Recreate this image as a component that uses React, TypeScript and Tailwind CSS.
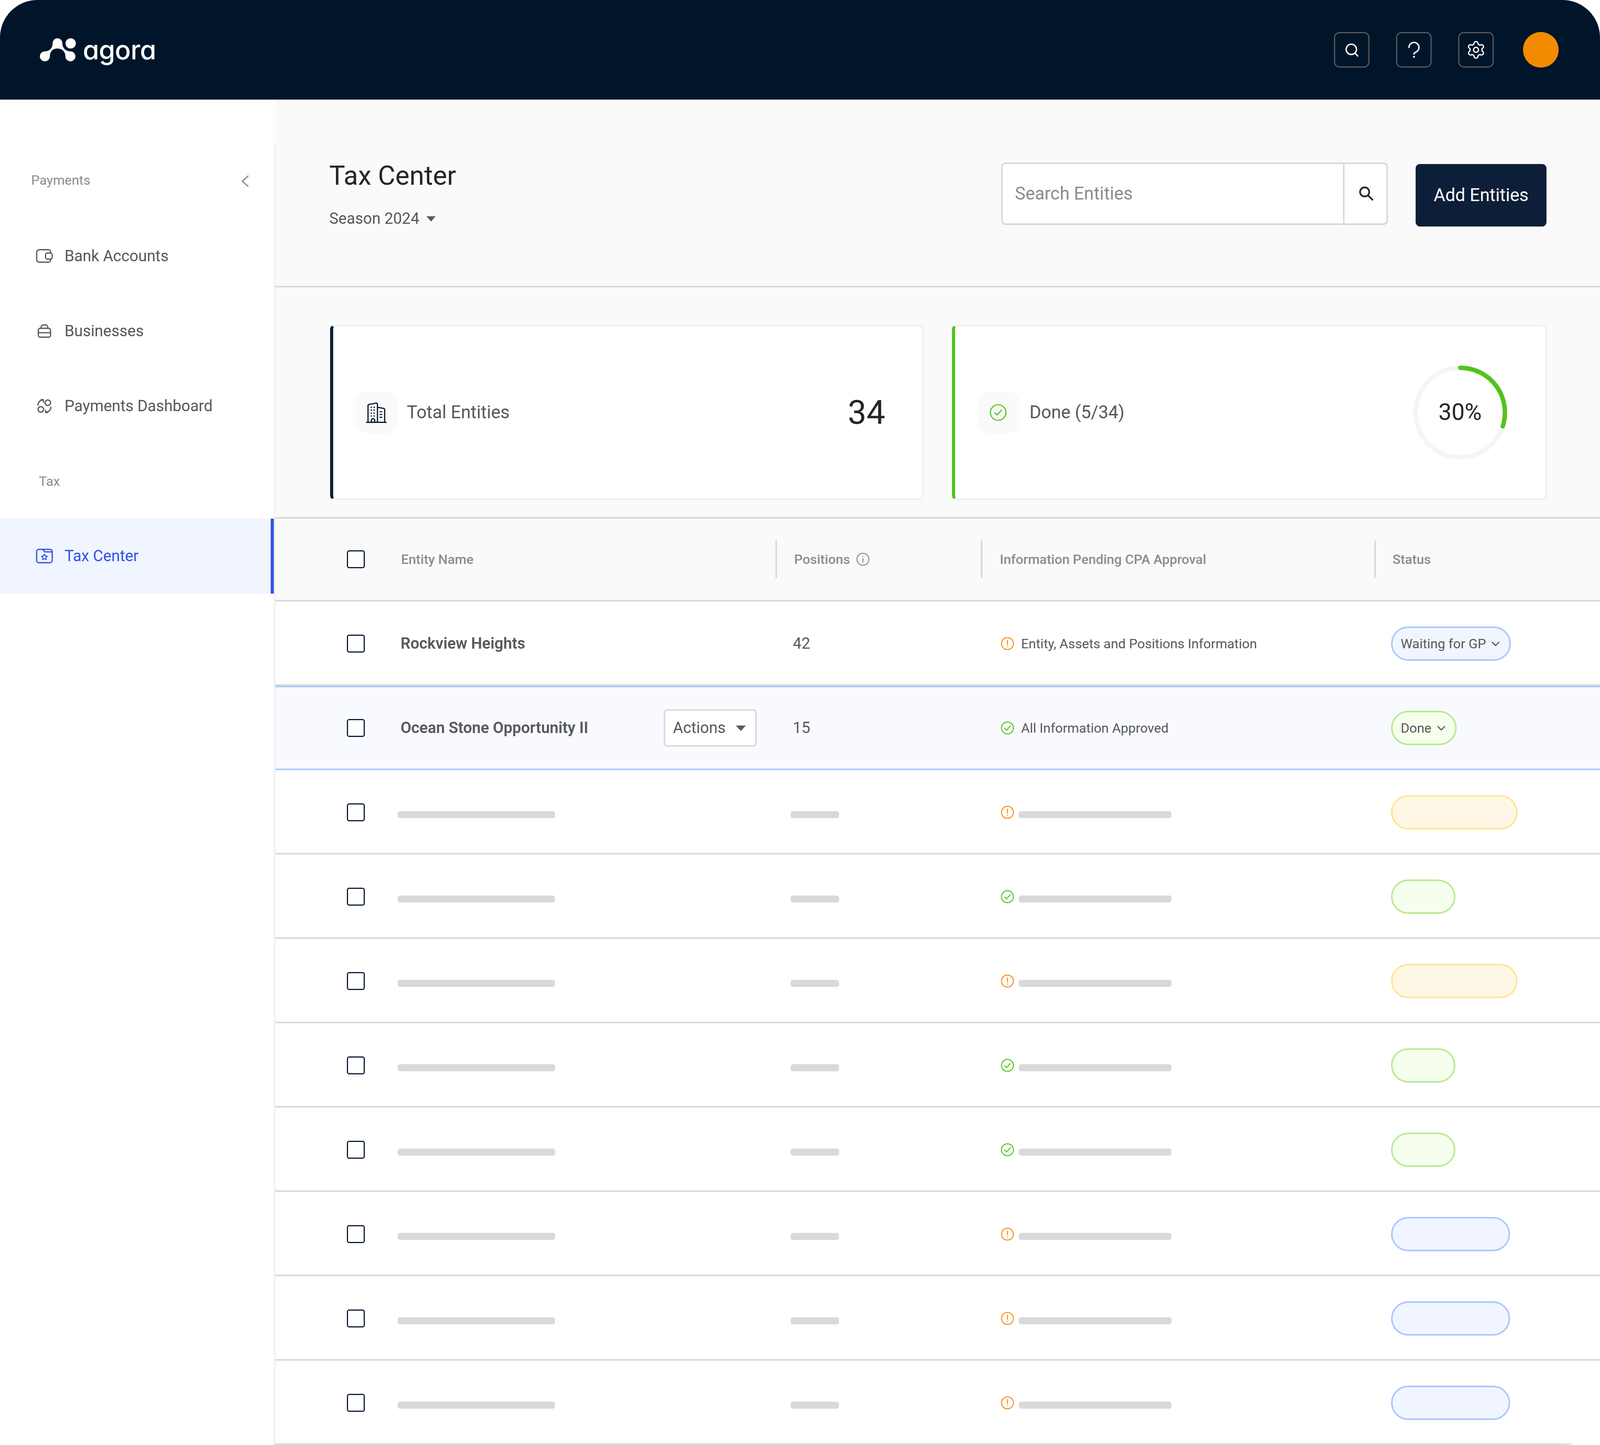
import type { ReactNode } from "react";
import { Settings } from "lucide-react";

type Tone = "warn" | "ok";
type Pill = "yellow" | "green" | "blue";

const skeletonRows: { tone: Tone; pill: Pill }[] = [
  { tone: "warn", pill: "yellow" },
  { tone: "ok", pill: "green" },
  { tone: "warn", pill: "yellow" },
  { tone: "ok", pill: "green" },
  { tone: "ok", pill: "green" },
  { tone: "warn", pill: "blue" },
  { tone: "warn", pill: "blue" },
  { tone: "warn", pill: "blue" },
];

function Logo() {
  return (
    <div className="flex items-center gap-[0.417vw]">
      <svg className="w-[2.257vw] h-[1.458vw]" viewBox="0 0 130 84" fill="#fff">
        <path d="M46 18 A17.5 18 0 0 1 81 18 C81 34 92 47 110 47 A18 18 0 1 1 92 65 C92 48 80 37 63 37 C46 37 36 48 36 65 A18 18 0 1 1 18 47 C36 47 46 34 46 18 Z" />
        <circle cx="111" cy="18.5" r="18.5" />
      </svg>
      <span className="text-[1.649vw] leading-[1.458vw] font-medium text-white font-['Inter',sans-serif] [font-feature-settings:'cv11'] tracking-[-0.017vw]">
        agora
      </span>
    </div>
  );
}

function HeaderButton({ children }: { children: ReactNode }) {
  return (
    <div className="w-[2.222vw] h-[2.222vw] rounded-[0.347vw] border-[3px] border-[#595959] flex items-center justify-center">
      {children}
    </div>
  );
}

function Header() {
  return (
    <header className="h-[255px] shrink-0 bg-[#001529] flex items-center justify-between pl-[2.5vw] pr-[2.587vw]">
      <Logo />
      <div className="flex items-center">
        <div className="flex items-center gap-[1.667vw] mr-[1.823vw]">
          <HeaderButton>
            <svg className="w-[1.111vw] h-[1.111vw]" viewBox="0 0 64 64" fill="none" stroke="#fff" strokeWidth="5" strokeLinecap="round">
              <circle cx="30" cy="30" r="18.5" />
              <path d="M43 43 L53 54" />
            </svg>
          </HeaderButton>
          <HeaderButton>
            <svg className="w-[1.111vw] h-[1.111vw]" viewBox="0 0 64 64" fill="none" stroke="#fff" strokeWidth="5" strokeLinecap="round">
              <path d="M14 23 A18 18 0 1 1 41.5 38.5 C35 42 32 43 32 47" />
              <circle cx="32" cy="57" r="2.5" fill="#fff" stroke="#fff" strokeWidth="2" />
            </svg>
          </HeaderButton>
          <HeaderButton>
            <Settings className="w-[1.25vw] h-[1.25vw]" color="#fff" strokeWidth={1.5} />
          </HeaderButton>
        </div>
        <div className="w-[2.222vw] h-[2.222vw] rounded-full bg-[#F38B00]" />
      </div>
    </header>
  );
}

function SideItem({ label, active, children }: { label: string; active?: boolean; children: ReactNode }) {
  return (
    <div
      className={
        active
          ? "h-[192px] flex items-center pl-[2.222vw] bg-[#F0F5FF] border-r-[0.208vw] border-[#2F54EB]"
          : "h-[192px] flex items-center pl-[2.222vw]"
      }
    >
      {children}
      <span
        className={
          active
            ? "ml-[0.7vw] text-[0.972vw] leading-[1.2] text-[#2F54EB]"
            : "ml-[0.7vw] text-[0.972vw] leading-[1.2] text-[#595959]"
        }
      >
        {label}
      </span>
    </div>
  );
}

function Sidebar() {
  const s = { fill: "none", stroke: "#595959", strokeWidth: 4.5, strokeLinecap: "round" as const, strokeLinejoin: "round" as const };
  const icon = "w-[1.111vw] h-[1.111vw] shrink-0";
  return (
    <aside className="w-[17.222vw] shrink-0 flex flex-col bg-white">
      <div className="h-[112px] shrink-0" />
      <div className="flex-1 border-r-4 border-[#F0F0F0] flex flex-col">
        <div className="h-[193px] flex items-center justify-between pl-[1.95vw] pr-[1.597vw]">
          <span className="text-[0.833vw] leading-[1.2] text-[#8C8C8C] mt-[-4px]">Payments</span>
          <svg className="w-[0.451vw] h-[0.729vw]" viewBox="0 0 26 42" fill="none" stroke="#8C8C8C" strokeWidth="4.5">
            <path d="M26 1 L3 21 L26 41" strokeLinejoin="round" />
          </svg>
        </div>
        <SideItem label="Bank Accounts">
          <svg className={icon} viewBox="0 0 64 64" {...s}>
            <path d="M54 21 V17 A8 8 0 0 0 46 9 H14 A10 10 0 0 0 4 19 V44 A10 10 0 0 0 14 54 H46 A8 8 0 0 0 54 46 V43" />
            <rect x="36" y="21" width="24" height="22" rx="7" />
          </svg>
        </SideItem>
        <SideItem label="Businesses">
          <svg className={icon} viewBox="0 0 64 64" {...s}>
            <rect x="10" y="22" width="44" height="32" rx="7" />
            <path d="M10 38 H54" />
            <path d="M20 22 V18 A8 8 0 0 1 28 10 H36 A8 8 0 0 1 44 18 V22" />
          </svg>
        </SideItem>
        <SideItem label="Payments Dashboard">
          <svg className={icon} viewBox="0 0 64 64" {...s}>
            <circle cx="44" cy="20" r="10" />
            <circle cx="19" cy="44" r="10" />
            <path d="M9 28 A18 18 0 0 1 27 10" />
            <path d="M20 9 H28 V17" />
            <path d="M55 36 A18 18 0 0 1 37 54" />
            <path d="M44 55 H36 V47" />
          </svg>
        </SideItem>
        <div className="h-[192px] flex items-center pl-[2.431vw]">
          <span className="text-[0.833vw] leading-[1.2] text-[#8C8C8C]">Tax</span>
        </div>
        <SideItem label="Tax Center" active>
          <svg className={icon} viewBox="0 0 64 64" fill="none" stroke="#2F54EB" strokeWidth="4.5" strokeLinecap="round" strokeLinejoin="round">
            <rect x="4" y="8" width="56" height="48" rx="8" />
            <path d="M26 8 L33 17 H60" />
            <path d="M32 25 L35.3 31.6 L42.5 32.6 L37.2 37.7 L38.5 45 L32 41.5 L25.5 45 L26.8 37.7 L21.5 32.6 L28.7 31.6 Z" strokeWidth="3.5" />
          </svg>
        </SideItem>
      </div>
    </aside>
  );
}

function TopBar() {
  return (
    <div className="h-[481px] shrink-0 flex justify-between border-b-4 border-[#D9D9D9] pl-[3.351vw] pr-[3.333vw]">
      <div className="pt-[131px]">
        <div className="text-[1.667vw] leading-[128px] text-[#262626]">Tax Center</div>
        <div className="flex items-center mt-[2px] h-[88px]">
          <span className="text-[0.972vw] leading-[88px] text-[#595959]">Season 2024</span>
          <svg className="ml-[0.434vw] w-[0.608vw] h-[0.347vw]" viewBox="0 0 35 20" fill="#595959">
            <path d="M1 1 H34 L17.5 20 Z" />
          </svg>
        </div>
      </div>
      <div className="flex items-start">
        <div className="mt-[161px] w-[24.184vw] h-[160px] flex bg-white border-4 border-[#D9D9D9] rounded-[0.278vw]">
          <div className="flex-1 flex items-center pl-[0.764vw] border-r-4 border-[#D9D9D9]">
            <span className="text-[1.111vw] leading-[1.2] text-[#8C8C8C]">Search Entities</span>
          </div>
          <div className="w-[2.622vw] flex items-center justify-center pl-[0.08vw]">
            <svg className="w-[1.111vw] h-[1.111vw]" viewBox="0 0 64 64" fill="none" stroke="#262626" strokeWidth="6">
              <circle cx="26" cy="26" r="16.5" />
              <path d="M38 38 L56 56" />
            </svg>
          </div>
        </div>
        <div className="mt-[165px] ml-[1.719vw] w-[8.194vw] h-[160px] rounded-[0.278vw] bg-[#0D1E38] flex items-center justify-center">
          <span className="text-[1.111vw] leading-[1.2] text-white">Add Entities</span>
        </div>
      </div>
    </div>
  );
}

function StatsRow() {
  const card = "flex-1 h-[448px] flex items-center justify-between bg-white rounded-[0.278vw] border-4 border-[#F0F0F0] border-l-[0.208vw]";
  const tile = "w-[2.639vw] h-[2.639vw] rounded-[0.694vw] bg-[#FAFAFA] flex items-center justify-center";
  return (
    <div className="shrink-0 flex gap-[1.771vw] pt-[96px] pb-[44px] pl-[3.403vw] pr-[3.333vw]">
      <div className={`${card} border-l-[#0D1E38] pl-[1.389vw] pr-[2.3vw]`}>
        <div className="flex items-center gap-[0.573vw]">
          <div className={tile}>
            <svg className="w-[1.389vw] h-[1.389vw]" viewBox="0 0 80 80" fill="none" stroke="#0D1E38" strokeWidth="4.5" strokeLinecap="round" strokeLinejoin="round">
              <path d="M5 75 H75" />
              <path d="M10 75 V15 Q10 11 14 10.5 L38 6 Q44 5.5 44 11 V75" />
              <path d="M44 21 L66 25 Q70 26 70 30 V75" />
              <path d="M22 75 V68 A6 6 0 0 1 34 68 V75" />
              <g fill="#0D1E38" stroke="none">
                <circle cx="22" cy="21" r="2.6" />
                <circle cx="32" cy="21" r="2.6" />
                <circle cx="22" cy="31" r="2.6" />
                <circle cx="32" cy="31" r="2.6" />
                <circle cx="22" cy="42" r="2.6" />
                <circle cx="32" cy="42" r="2.6" />
                <circle cx="22" cy="52" r="2.6" />
                <circle cx="32" cy="52" r="2.6" />
              </g>
              <path d="M53 37 H60 M53 47 H60 M53 57 H60" strokeWidth="4" />
            </svg>
          </div>
          <span className="text-[1.111vw] leading-[1.2] text-[#595959]">Total Entities</span>
        </div>
        <span className="text-[2.083vw] leading-[1.2] text-[#262626]">34</span>
      </div>
      <div className={`${card} border-l-[#52C41A] pl-[1.389vw] pr-[2.378vw]`}>
        <div className="flex items-center gap-[0.625vw]">
          <div className={tile}>
            <svg className="w-[1.042vw] h-[1.042vw]" viewBox="0 0 60 60" fill="none" stroke="#52C41A" strokeWidth="4" strokeLinecap="round" strokeLinejoin="round">
              <circle cx="30" cy="30" r="28" />
              <path d="M18 31 L26 39 L42 21" />
            </svg>
          </div>
          <span className="text-[1.111vw] leading-[1.2] text-[#595959]">Done (5/34)</span>
        </div>
        <div className="relative w-[5.868vw] h-[5.868vw] flex items-center justify-center">
          <svg className="absolute inset-0 w-full h-full" viewBox="0 0 338 338" fill="none" strokeWidth="16">
            <circle cx="169" cy="169" r="161" stroke="#F5F5F5" />
            <path d="M169 8 A161 161 0 0 1 322.1 218.8" stroke="#52C41A" strokeLinecap="round" />
          </svg>
          <span className="relative text-[1.458vw] leading-[1.2] text-[#262626]">30%</span>
        </div>
      </div>
    </div>
  );
}

function Checkbox() {
  return <div className="w-[1.111vw] h-[1.111vw] rounded-[0.139vw] border-[3px] border-[#0D1E38] bg-white shrink-0" />;
}

function StatusIcon({ tone }: { tone: Tone }) {
  return tone === "ok" ? (
    <svg className="shrink-0 w-[0.833vw] h-[0.833vw]" viewBox="0 0 48 48" fill="none" stroke="#52C41A" strokeWidth="3.5" strokeLinecap="round" strokeLinejoin="round">
      <circle cx="24" cy="24" r="21.5" />
      <path d="M14 25 L21 32 L34 17" />
    </svg>
  ) : (
    <svg className="shrink-0 w-[0.833vw] h-[0.833vw]" viewBox="0 0 48 48" fill="none" stroke="#FA8C16" strokeWidth="3.5" strokeLinecap="round">
      <circle cx="24" cy="24" r="21.5" />
      <path d="M24 12 V27" />
      <path d="M24 34 V35" />
    </svg>
  );
}

const pillClass: Record<Pill, string> = {
  yellow: "bg-[#FFF7E6] border-[#FFE58F]",
  green: "bg-[#F6FFED] border-[#B7EB8F]",
  blue: "bg-[#F0F5FF] border-[#ADC6FF]",
};

const pillWidth: Record<Pill, string> = {
  yellow: "w-[7.899vw]",
  green: "w-[4.028vw]",
  blue: "w-[7.431vw]",
};

function StatusPill({ pill, label }: { pill: Pill; label?: string }) {
  if (!label) {
    return <div className={`h-[88px] rounded-full border-4 ${pillClass[pill]} ${pillWidth[pill]}`} />;
  }
  return (
    <div className={`h-[88px] rounded-full border-4 flex items-center pl-[0.5vw] pr-[0.6vw] ${pillClass[pill]}`}>
      <span className="text-[0.833vw] leading-[1.2] text-[#595959]">{label}</span>
      <svg className="ml-[0.347vw] w-[0.521vw] h-[0.313vw]" viewBox="0 0 30 18" fill="none" stroke="#434343" strokeWidth="3.5">
        <path d="M2 2 L15 16 L28 2" />
      </svg>
    </div>
  );
}

const rowGrid = "h-[216px] grid grid-cols-[7.813vw_23.42vw_12.847vw_24.583vw_14.115vw] items-center border-y-4";

function TableHeader() {
  const label = "text-[0.833vw] leading-[1.2] font-medium text-[#8C8C8C]";
  const cell = "h-[96px] flex items-center border-l-4 border-[#D9D9D9]";
  return (
    <div className={`${rowGrid} bg-[#FAFAFA] border-[#D9D9D9]`}>
      <div className="pl-[4.462vw]">
        <Checkbox />
      </div>
      <div className="pl-[0.035vw]">
        <span className={label}>Entity Name</span>
      </div>
      <div className={`${cell} pl-[1.08vw]`}>
        <span className={label}>Positions</span>
        <svg className="ml-[0.399vw] w-[0.833vw] h-[0.833vw]" viewBox="0 0 48 48" fill="none" stroke="#8C8C8C" strokeWidth="3.5" strokeLinecap="round">
          <circle cx="24" cy="24" r="21.5" />
          <path d="M24 21 V35" />
          <path d="M24 13 V14" />
        </svg>
      </div>
      <div className={`${cell} pl-[1.09vw]`}>
        <span className={label}>Information Pending CPA Approval</span>
      </div>
      <div className={`${cell} pl-[1.05vw]`}>
        <span className={label}>Status</span>
      </div>
    </div>
  );
}

function DataRow({
  name,
  count,
  tone,
  info,
  pill,
  status,
  selected,
}: {
  name: string;
  count: string;
  tone: Tone;
  info: string;
  pill: Pill;
  status: string;
  selected?: boolean;
}) {
  return (
    <div
      className={
        selected
          ? `${rowGrid} bg-[#F8FAFF] border-[#ADC6FF]`
          : `${rowGrid} bg-white border-t-transparent border-b-[#D9D9D9]`
      }
    >
      <div className="pl-[4.462vw]">
        <Checkbox />
      </div>
      <div className="flex items-center justify-between pr-[1.163vw]">
        <span className="text-[0.972vw] leading-[1.2] font-semibold text-[#595959]">{name}</span>
        {selected && (
          <div className="w-[5.816vw] h-[96px] rounded-[0.208vw] border-4 border-[#D9D9D9] bg-white flex items-center justify-between pl-[0.486vw] pr-[0.556vw]">
            <span className="text-[0.972vw] leading-[1.2] text-[#595959]">Actions</span>
            <svg className="w-[0.66vw] h-[0.365vw]" viewBox="0 0 38 21" fill="#595959">
              <path d="M1 1 H37 L19 21 Z" />
            </svg>
          </div>
        )}
      </div>
      <div className="pl-[1.094vw]">
        <span className="text-[0.972vw] leading-[1.2] text-[#595959]">{count}</span>
      </div>
      <div className="pl-[1.25vw] flex items-center gap-[0.434vw]">
        <StatusIcon tone={tone} />
        <span className="text-[0.833vw] leading-[1.2] text-[#595959]">{info}</span>
      </div>
      <div className="pl-[1.059vw] flex">
        <StatusPill pill={pill} label={status} />
      </div>
    </div>
  );
}

function SkeletonRow({ tone, pill }: { tone: Tone; pill: Pill }) {
  return (
    <div className={`${rowGrid} bg-white border-t-transparent border-b-[#D9D9D9]`}>
      <div className="pl-[4.462vw]">
        <Checkbox />
      </div>
      <div>
        <div className="ml-[-0.174vw] mt-[12px] w-[9.826vw] h-[18px] rounded-[6px] bg-[#D9D9D9]" />
      </div>
      <div className="pl-[0.955vw]">
        <div className="mt-[12px] w-[3.038vw] h-[18px] rounded-[6px] bg-[#D9D9D9]" />
      </div>
      <div className="pl-[1.25vw] flex items-center gap-[0.278vw]">
        <StatusIcon tone={tone} />
        <div className="mt-[12px] w-[9.566vw] h-[18px] rounded-[6px] bg-[#D9D9D9]" />
      </div>
      <div className="pl-[1.059vw] flex">
        <StatusPill pill={pill} />
      </div>
    </div>
  );
}

export default function App() {
  return (
    <div className="w-screen h-[3700px] overflow-hidden rounded-[96px] flex flex-col bg-white font-['Roboto',sans-serif]">
      <Header />
      <div className="flex-1 flex min-h-0">
        <Sidebar />
        <main className="flex-1 min-w-0 flex flex-col bg-[#FAFAFA]">
          <TopBar />
          <StatsRow />
          <TableHeader />
          <DataRow name="Rockview Heights" count="42" tone="warn" info="Entity, Assets and Positions Information" pill="blue" status="Waiting for GP" />
          <DataRow name="Ocean Stone Opportunity II" count="15" tone="ok" info="All Information Approved" pill="green" status="Done" selected />
          {skeletonRows.map((r, i) => (
            <SkeletonRow key={i} tone={r.tone} pill={r.pill} />
          ))}
        </main>
      </div>
    </div>
  );
}
